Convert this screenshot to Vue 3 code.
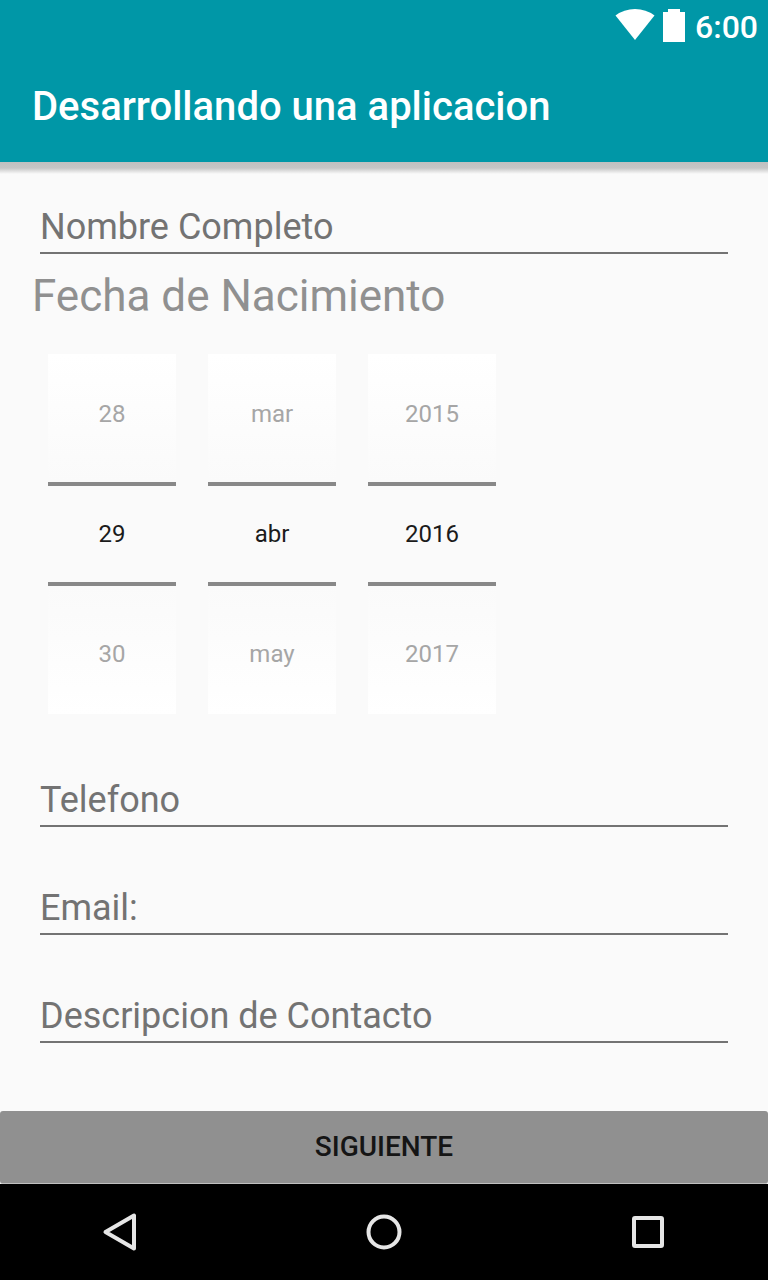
<script setup>
import { computed, reactive, ref } from 'vue'

const months = ['ene', 'feb', 'mar', 'abr', 'may', 'jun', 'jul', 'ago', 'sep', 'oct', 'nov', 'dic']
const date = reactive({ day: 29, month: 3, year: 2016 })
const form = reactive({ name: '', phone: '', email: '', description: '' })
const contactFields = [
  { key: 'phone', label: 'Telefono', type: 'tel' },
  { key: 'email', label: 'Email:', type: 'email' },
  { key: 'description', label: 'Descripcion de Contacto', type: 'text' },
]
const time = ref('6:00')

const pickers = computed(() => {
  const days = new Date(date.year, date.month + 1, 0).getDate()
  const wrapDay = (n) => ((n - 1 + days) % days) + 1
  const wrapMonth = (n) => (n + 12) % 12
  return [
    { key: 'day', label: 'Dia', wrap: wrapDay, show: (n) => n },
    { key: 'month', label: 'Mes', wrap: wrapMonth, show: (n) => months[n] },
    { key: 'year', label: 'Año', wrap: (n) => n, show: (n) => n },
  ].map((p) => {
    const prev = p.wrap(date[p.key] - 1)
    const next = p.wrap(date[p.key] + 1)
    return { ...p, prev, next, prevText: p.show(prev), text: p.show(date[p.key]), nextText: p.show(next) }
  })
})
</script>

<template>
  <div class="screen">
    <header class="top">
      <div class="status">
        <svg class="wifi" viewBox="0 0 40 32" aria-hidden="true">
          <path d="M0.5 6.5Q9 0 20 0Q31 0 39.5 6.5L20 31Z" />
        </svg>
        <svg class="battery" viewBox="0 0 22 33" aria-hidden="true">
          <path d="M0 3H5V0H17V3H22V33H0Z" />
        </svg>
        <span class="time">{{ time }}</span>
      </div>
      <h1 class="title">Desarrollando una aplicacion</h1>
    </header>

    <form class="form" @submit.prevent>
      <div class="fields">
        <input v-model="form.name" class="field" type="text" placeholder="Nombre Completo" aria-label="Nombre Completo" />
        <h2 class="caption">Fecha de Nacimiento</h2>
        <div class="date">
          <div v-for="p in pickers" :key="p.key" class="picker">
            <button type="button" class="step prev" @click="date[p.key] = p.prev">{{ p.prevText }}</button>
            <input class="value" type="text" :value="p.text" :aria-label="p.label" readonly />
            <button type="button" class="step next" @click="date[p.key] = p.next">{{ p.nextText }}</button>
          </div>
        </div>
        <div class="contact">
          <input
            v-for="f in contactFields"
            :key="f.key"
            v-model="form[f.key]"
            class="field"
            :type="f.type"
            :placeholder="f.label"
            :aria-label="f.label"
          />
        </div>
      </div>
      <button type="submit" class="submit">SIGUIENTE</button>
    </form>

    <nav class="nav">
      <button type="button" class="key" aria-label="Atras">
        <svg viewBox="0 0 48 48"><path d="M38 7.5V40.5L9.5 24Z" /></svg>
      </button>
      <button type="button" class="key" aria-label="Inicio">
        <svg viewBox="0 0 48 48"><circle cx="24" cy="24" r="15.5" /></svg>
      </button>
      <button type="button" class="key" aria-label="Recientes">
        <svg viewBox="0 0 48 48"><rect x="10" y="10" width="28" height="28" rx="1" /></svg>
      </button>
    </nav>
  </div>
</template>

<style>
body {
  margin: 0;
  background: #fafafa;
}
</style>

<style scoped>
.screen {
  display: flex;
  flex-direction: column;
  min-height: 100vh;
  background: #fafafa;
  font-family: Roboto, "Noto Sans", sans-serif;
}

.screen *,
.screen {
  box-sizing: border-box;
}

button,
input {
  margin: 0;
  padding: 0;
  border: 0;
  border-radius: 0;
  background: none;
  font-family: inherit;
}

.top {
  background: #0097a7;
  color: #fff;
}

.top::after {
  content: "";
  display: block;
  height: 12px;
  margin-bottom: -12px;
  background: linear-gradient(#c0c0c0, #c6c6c6 50%, #fafafa);
}

.status {
  display: flex;
  justify-content: flex-end;
  align-items: center;
  gap: 8px;
  height: 50px;
  padding-right: 10px;
}

.status svg {
  fill: #fff;
}

.wifi {
  width: 40px;
  height: 32px;
}

.battery {
  width: 22px;
  height: 33px;
}

.time {
  padding: 4px 0 0 2px;
  font-size: 32px;
  font-weight: 500;
  line-height: 40px;
}

.title {
  margin: 0;
  padding: 2px 32px 0;
  font-size: 40px;
  font-weight: 500;
  line-height: 110px;
}

.form {
  display: flex;
  flex: 1;
  flex-direction: column;
}

.fields {
  flex: 1;
  padding: 40px 32px 32px;
}

.field {
  display: block;
  width: calc(100% - 16px);
  height: 52px;
  margin: 0 8px;
  border-bottom: 2px solid #737373;
  color: #212121;
  font-size: 36px;
}

.field::placeholder {
  color: #737373;
  opacity: 1;
}

.caption {
  margin: 16px 0 32px;
  color: #909090;
  font-size: 44px;
  font-weight: 400;
  line-height: 52px;
}

.date {
  display: flex;
  gap: 32px;
  padding-left: 16px;
}

.picker {
  display: flex;
  flex-direction: column;
  width: 128px;
}

.step {
  height: 128px;
  color: #a6a6a6;
  font-size: 24px;
  line-height: 28px;
}

.prev {
  padding-bottom: 8px;
  background: linear-gradient(#fff, #fafafa);
}

.next {
  padding-top: 8px;
  background: linear-gradient(#fafafa, #fff);
}

.value {
  width: 100%;
  height: 104px;
  border: solid #888;
  border-width: 4px 0;
  color: #1b1b1b;
  font-size: 24px;
  text-align: center;
}

.contact {
  display: grid;
  gap: 56px;
  margin-top: 61px;
}

.submit {
  height: 73px;
  padding-bottom: 2px;
  border-bottom: 1px solid #c0c0c0;
  border-radius: 3px;
  background: #909090;
  color: #151515;
  font-size: 28px;
  font-weight: 500;
}

.nav {
  display: flex;
  justify-content: space-between;
  height: 96px;
  padding: 0 72px;
  background: #000;
}

.key {
  display: grid;
  place-items: center;
  width: 96px;
}

.key svg {
  width: 48px;
  height: 48px;
  fill: none;
  stroke: #e6e6e6;
  stroke-width: 4;
  stroke-linejoin: round;
}
</style>
